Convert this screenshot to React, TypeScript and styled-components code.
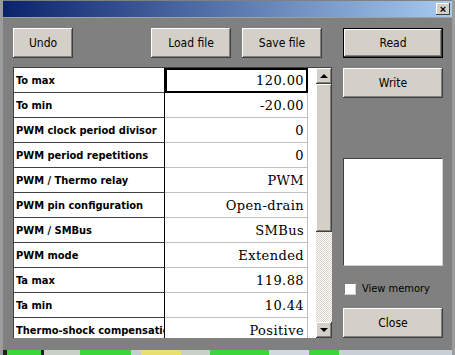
import styled, { createGlobalStyle } from "styled-components"

const Global = createGlobalStyle`
    html, body {
        margin: 0;
        padding: 0;
        background: #808080;
        overflow: hidden;
    }
`

const uiFont = `"DejaVu Sans Condensed", "Liberation Sans", Arial, sans-serif`

const Window = styled.div`
    width: 455px;
    height: 355px;
    display: flex;
    flex-direction: column;
    background: #808080;
    box-sizing: border-box;
    border-left: 3px solid #9c9c9c;
    border-right: 3px solid #9c9c9c;
    font-family: ${uiFont};
    font-stretch: condensed;
    overflow: hidden;
`

const TitleBar = styled.div`
    height: 16px;
    margin-top: 1px;
    display: flex;
    align-items: center;
    justify-content: flex-end;
    padding-right: 2px;
    background: linear-gradient(to right, #0a246a, #a6caf0);
    border-bottom: 1px solid #a0a0a0;
`

const CloseBox = styled.div`
    width: 14px;
    height: 12px;
    background: #d4d0c8;
    box-shadow: inset -1px -1px #404040, inset 1px 1px #fff;
    display: flex;
    align-items: center;
    justify-content: center;
    font-family: "Liberation Sans", Arial, sans-serif;
    font-size: 11px;
    font-weight: bold;
    line-height: 1;
    color: #000;
`

const Body = styled.div`
    flex: 1;
    display: flex;
    gap: 11px;
    padding: 10px 0 0 10px;
`

const LeftCol = styled.div`
    width: 319px;
    display: flex;
    flex-direction: column;
`

const RightCol = styled.div`
    width: 100px;
    display: flex;
    flex-direction: column;
`

const Toolbar = styled.div`
    display: flex;
    gap: 11px;
    padding-right: 10px;
    .push {
        margin-left: auto;
    }
`

const Button = styled.button<{ $w?: number; $top?: number; $default?: boolean }>`
    width: ${p => (p.$w ? `${p.$w}px` : "100%")};
    height: 30px;
    margin-top: ${p => p.$top || 0}px;
    padding: 0;
    background: #d4d0c8;
    color: #000;
    font-family: ${uiFont};
    font-stretch: condensed;
    font-size: 12px;
    border: ${p => (p.$default ? "1px solid #000" : "none")};
    box-shadow: inset -1px -1px #404040, inset 1px 1px #fff, inset -2px -2px #808080;
    cursor: pointer;
`

const Grid = styled.div`
    margin-top: 9px;
    height: 271px;
    display: flex;
    background: #fff;
    border-top: 1px solid #404040;
    border-left: 1px solid #404040;
    box-sizing: border-box;
    overflow: hidden;
`

const Rows = styled.div`
    width: 294px;
    display: flex;
    flex-direction: column;
`

const Row = styled.div`
    display: flex;
    height: 25px;
    flex-shrink: 0;
`

const Label = styled.div`
    width: 148px;
    border-right: 1px solid #000;
    border-bottom: 1px solid #404040;
    padding-left: 2px;
    display: flex;
    align-items: center;
    font-size: 11px;
    font-weight: bold;
    white-space: nowrap;
    overflow: hidden;
    color: #000;
`

const Value = styled.div<{ $selected?: boolean }>`
    flex: 1;
    box-sizing: border-box;
    border-bottom: 1px solid #c0c0c0;
    border-right: 1px solid #c0c0c0;
    outline: ${p => (p.$selected ? "2px solid #000" : "none")};
    outline-offset: -2px;
    display: flex;
    align-items: center;
    justify-content: flex-end;
    padding-right: 3px;
    font-family: "DejaVu Serif", "Liberation Serif", serif;
    font-stretch: normal;
    font-size: 13px;
    letter-spacing: 0.4px;
    color: #000;
`

const Scrollbar = styled.div`
    margin-left: auto;
    width: 16px;
    height: 270px;
    display: flex;
    flex-direction: column;
    background: repeating-conic-gradient(#ffffff 0 25%, #d4d0c8 0 50%) 0 0 / 2px 2px;
`

const ScrollButton = styled.div<{ $down?: boolean }>`
    height: 16px;
    flex-shrink: 0;
    margin-top: ${p => (p.$down ? "auto" : "0")};
    background: #d4d0c8;
    box-shadow: inset -1px -1px #404040, inset 1px 1px #fff, inset -2px -2px #808080;
    display: flex;
    align-items: center;
    justify-content: center;
    &::after {
        content: "";
        width: 0;
        height: 0;
        border-left: 4px solid transparent;
        border-right: 4px solid transparent;
        ${p => (p.$down ? "border-top: 4px solid #000;" : "border-bottom: 4px solid #000;")}
    }
`

const Thumb = styled.div`
    height: 148px;
    flex-shrink: 0;
    background: #d4d0c8;
    box-shadow: inset -1px -1px #404040, inset 1px 1px #fff, inset -2px -2px #808080;
`

const MemoryBox = styled.div`
    margin-top: 60px;
    height: 108px;
    box-sizing: border-box;
    background: #fff;
    border: 1px solid;
    border-color: #404040 #d4d0c8 #d4d0c8 #404040;
`

const CheckRow = styled.label`
    margin-top: 16px;
    display: flex;
    align-items: center;
    gap: 6px;
    padding-left: 1px;
    font-size: 11px;
    color: #000;
    height: 13px;
`

const CheckBox = styled.span`
    width: 12px;
    height: 12px;
    box-sizing: border-box;
    background: #fff;
    border: 1px solid;
    border-color: #808080 #d4d0c8 #d4d0c8 #808080;
`

const Strip = styled.div`
    height: 5px;
    display: flex;
    background: #1c1c1c;
`

const StripPart = styled.div<{ $w: number; $c: string }>`
    width: ${p => p.$w}px;
    background: ${p => p.$c};
`

const rows = [
    { label: "To max", value: "120.00" },
    { label: "To min", value: "-20.00" },
    { label: "PWM clock period divisor", value: "0" },
    { label: "PWM period repetitions", value: "0" },
    { label: "PWM / Thermo relay", value: "PWM" },
    { label: "PWM pin configuration", value: "Open-drain" },
    { label: "PWM / SMBus", value: "SMBus" },
    { label: "PWM mode", value: "Extended" },
    { label: "Ta max", value: "119.88" },
    { label: "Ta min", value: "10.44" },
    { label: "Thermo-shock compensation", value: "Positive" },
]

const strip = [
    { w: 4, c: "#202020" },
    { w: 34, c: "#3ad63a" },
    { w: 4, c: "#202020" },
    { w: 36, c: "#c8d0c8" },
    { w: 52, c: "#3ad63a" },
    { w: 10, c: "#c8d0c8" },
    { w: 40, c: "#e8e070" },
    { w: 30, c: "#c8d0c8" },
    { w: 60, c: "#3ad63a" },
    { w: 40, c: "#d0d8e0" },
    { w: 30, c: "#3ad63a" },
    { w: 115, c: "#c8d0d8" },
]

export default function App() {
    return (
        <>
            <Global />
            <Window>
                <TitleBar>
                    <CloseBox>×</CloseBox>
                </TitleBar>
                <Body>
                    <LeftCol>
                        <Toolbar>
                            <Button $w={60}>Undo</Button>
                            <Button $w={80} className="push">Load file</Button>
                            <Button $w={80}>Save file</Button>
                        </Toolbar>
                        <Grid>
                            <Rows>
                                {rows.map((r, i) => (
                                    <Row key={r.label}>
                                        <Label>{r.label}</Label>
                                        <Value $selected={i === 0}>{r.value}</Value>
                                    </Row>
                                ))}
                            </Rows>
                            <Scrollbar>
                                <ScrollButton />
                                <Thumb />
                                <ScrollButton $down />
                            </Scrollbar>
                        </Grid>
                    </LeftCol>
                    <RightCol>
                        <Button $default>Read</Button>
                        <Button $top={10}>Write</Button>
                        <MemoryBox />
                        <CheckRow>
                            <CheckBox />
                            View memory
                        </CheckRow>
                        <Button $top={13}>Close</Button>
                    </RightCol>
                </Body>
                <Strip>
                    {strip.map((s, i) => (
                        <StripPart key={i} $w={s.w} $c={s.c} />
                    ))}
                </Strip>
            </Window>
        </>
    )
}
